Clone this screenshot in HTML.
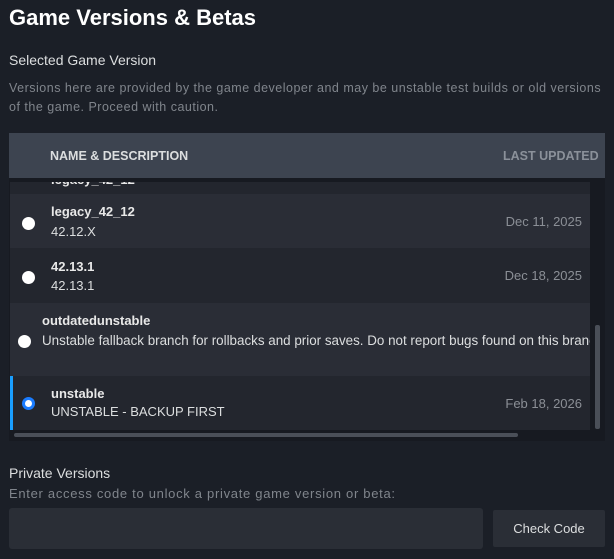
<!DOCTYPE html>
<html><head><style>
*{margin:0;padding:0;box-sizing:border-box}
body{width:614px;height:559px;background:#1b1f27;font-family:"Liberation Sans",sans-serif;color:#dcdedf;position:relative;overflow:hidden}
.a{position:absolute;white-space:nowrap}
h1{position:absolute;left:9px;top:5px;font-size:22px;font-weight:bold;color:#fff}
.row{position:absolute;left:10px;width:580px}
.r{position:absolute;left:12px;width:13px;height:13px;border-radius:50%;background:#fff}
.n{position:absolute;left:41px;font-size:13px;font-weight:bold;color:#e8e8e8;white-space:nowrap}
.d{position:absolute;left:41px;font-size:13px;color:#dcdedf;white-space:nowrap}
.dt{position:absolute;right:8px;font-size:13px;color:#8b8f96;white-space:nowrap}
</style></head><body>
<h1>Game Versions &amp; Betas</h1>
<div class="a" style="left:9px;top:52px;font-size:14px;color:#dcdedf">Selected Game Version</div>
<div class="a" style="left:9px;top:79px;font-size:12.5px;color:#80858c;line-height:19px;letter-spacing:0.5px">Versions here are provided by the game developer and may be unstable test builds or old versions<br>of the game. Proceed with caution.</div>
<div class="a" style="left:9px;top:133px;width:596px;height:308px;background:#171a21"></div>
<div class="a" style="left:9px;top:133px;width:596px;height:45px;background:#3d4450"></div>
<div class="a" style="left:50px;top:149px;font-size:12.5px;font-weight:bold;color:#dcdedf">NAME &amp; DESCRIPTION</div>
<div class="a" style="left:503px;top:149px;font-size:12.5px;font-weight:bold;color:#8b919a">LAST UPDATED</div>
<div class="row" style="top:182px;height:12px;background:#23262e;overflow:hidden"><div class="n" style="top:-10px">legacy_42_12</div></div>
<div class="row" style="top:194px;height:54px;background:#2a2d36"><div class="r" style="top:23px"></div><div class="n" style="top:10px">legacy_42_12</div><div class="d" style="top:30px">42.12.X</div><div class="dt" style="top:20px">Dec 11, 2025</div></div>
<div class="row" style="top:248px;height:55px;background:#23262e"><div class="r" style="top:23px"></div><div class="n" style="top:11px">42.13.1</div><div class="d" style="top:30px">42.13.1</div><div class="dt" style="top:20px">Dec 18, 2025</div></div>
<div class="row" style="top:303px;height:73px;background:#2a2d36;overflow:hidden"><div class="r" style="top:32px;left:8px"></div><div class="n" style="top:10px;left:32px">outdatedunstable</div><div class="d" style="top:30px;left:32px;font-size:13.4px">Unstable fallback branch for rollbacks and prior saves. Do not report bugs found on this branch</div></div>
<div class="row" style="top:376px;height:54px;background:#23262e;border-left:3px solid #1a9fff"><div class="a" style="left:9px;top:21px;width:13px;height:13px;border-radius:50%;background:#fff;border:3px solid #1a7cff"></div><div class="n" style="top:10px;left:38px">unstable</div><div class="d" style="top:28px;left:38px">UNSTABLE - BACKUP FIRST</div><div class="dt" style="top:20px">Feb 18, 2026</div></div>
<div class="a" style="left:14px;top:433px;width:504px;height:4px;border-radius:2px;background:#4a4f58"></div>
<div class="a" style="left:595px;top:325px;width:5px;height:104px;border-radius:2px;background:#4a4f58"></div>
<div class="a" style="left:9px;top:465px;font-size:14px;color:#dcdedf">Private Versions</div>
<div class="a" style="left:9px;top:486px;font-size:13px;color:#80858c;letter-spacing:0.7px">Enter access code to unlock a private game version or beta:</div>
<div class="a" style="left:9px;top:508px;width:474px;height:41px;border-radius:3px;background:#2a2e36"></div>
<div class="a" style="left:493px;top:510px;width:112px;height:37px;border-radius:2px;background:#2a2e36;color:#dcdedf;font-size:13px;text-align:center;line-height:37px">Check Code</div>
</body></html>
